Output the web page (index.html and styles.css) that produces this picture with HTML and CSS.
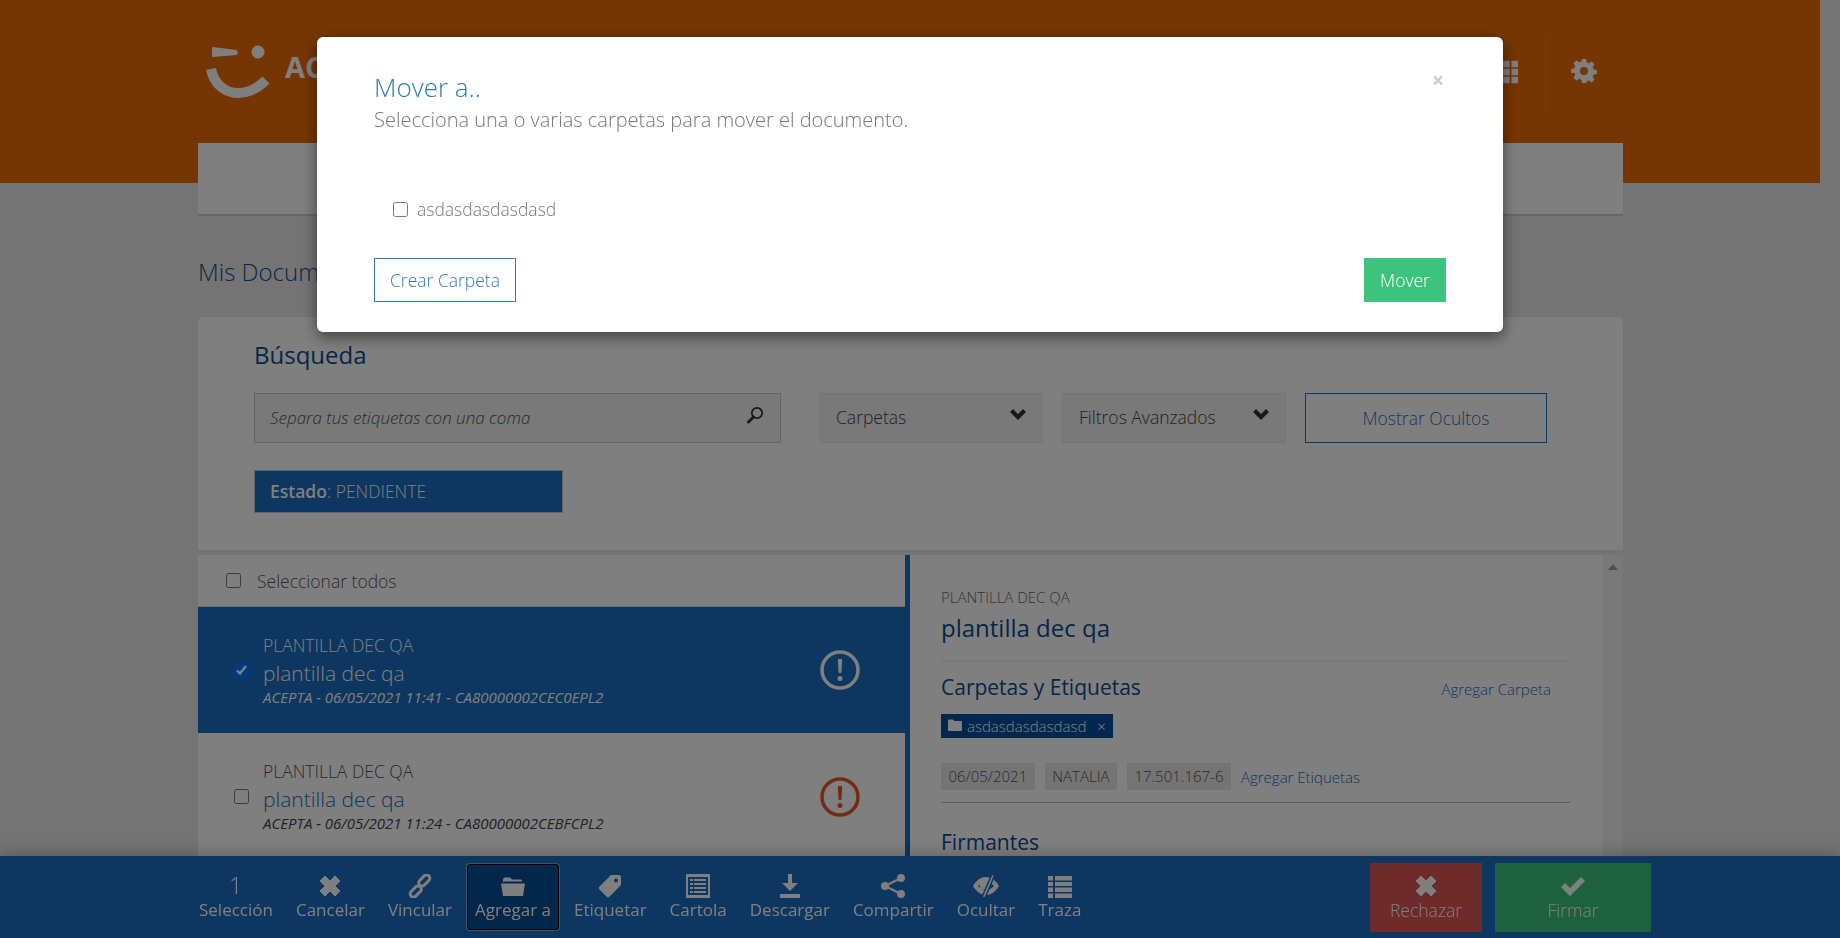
FILE: index.html
```html
<!DOCTYPE html>
<html lang="es">
<head>
<meta charset="utf-8">
<title>Mis Documentos</title>
<link rel="stylesheet" href="styles.css">
</head>
<body>
<div class="page">
  <header class="top">
    <div class="top-inner">
      <div class="logo">
        <svg class="logo-mark" viewBox="0 0 64 54"><path d="M7 3 L30 6 Q31.500 7.500 30 9 L7 11 Z" fill="currentColor" stroke="currentColor" stroke-width="2" stroke-linejoin="round"/><circle cx="52" cy="7" r="6.500" fill="currentColor"/><path d="M5 24 C8 40 20 48 32 48 C43 48 52 43 60 35" fill="none" stroke="currentColor" stroke-width="10"/></svg>
        <span class="logo-text">ACEPTA</span>
      </div>
      <div class="top-tools">
        <svg class="grid-ic" viewBox="0 0 16 24"><path d="M0 0h7v7H0zM9 0h7v7H9zM0 8.500h7v7H0zM9 8.500h7v7H9zM0 17h7v7H0zM9 17h7v7H9z" fill="currentColor"/></svg>
        <span class="top-sep"></span>
        <svg class="gear-ic" viewBox="0 0 24 24"><path fill="currentColor" fill-rule="evenodd" d="M10 0h4l.7 3.300 2.100.9 2.900-1.800 2.800 2.800-1.800 2.900.9 2.100 3.300.7v4l-3.300.7-.9 2.100 1.800 2.900-2.800 2.800-2.900-1.800-2.100.9L14 24h-4l-.7-3.300-2.100-.9-2.900 1.800-2.800-2.800 1.800-2.900-.9-2.100L-.9 14v-4l3.300-.7.9-2.100-1.800-2.900 2.800-2.800 2.900 1.800 2.100-.9zM12 8a4 4 0 1 0 0 8 4 4 0 0 0 0-8z"/></svg>
      </div>
    </div>
  </header>

  <main class="wrap">
    <nav class="tabs"></nav>
    <h1 class="page-title">Mis Documentos</h1>

    <section class="search">
      <h2 class="search-title">Búsqueda</h2>
      <div class="search-row">
        <div class="search-input">
          <span class="placeholder">Separa tus etiquetas con una coma</span>
          <svg class="mag" viewBox="0 0 18 18"><circle cx="11" cy="7" r="5.200" fill="none" stroke="currentColor" stroke-width="1.800"/><path d="M7.500 11 L2.500 16" stroke="currentColor" stroke-width="3" stroke-linecap="round"/></svg>
        </div>
        <div class="select"><span>Carpetas</span><svg class="chev" viewBox="0 0 16 12"><path d="M0 4 L3 1 L8 6 L13 1 L16 4 L8 12 Z" fill="currentColor"/></svg></div>
        <div class="select"><span>Filtros Avanzados</span><svg class="chev" viewBox="0 0 16 12"><path d="M0 4 L3 1 L8 6 L13 1 L16 4 L8 12 Z" fill="currentColor"/></svg></div>
        <button class="outline-btn">Mostrar Ocultos</button>
      </div>
      <div class="state"><b>Estado</b>: PENDIENTE</div>
    </section>

    <section class="panels">
      <div class="list">
        <label class="select-all"><input type="checkbox"><span>Seleccionar todos</span></label>
        <article class="doc doc-active">
          <input type="checkbox" checked>
          <div class="doc-text">
            <div class="doc-kind">PLANTILLA DEC QA</div>
            <div class="doc-name">plantilla dec qa</div>
            <div class="doc-meta">ACEPTA - 06/05/2021 11:41 - CA80000002CEC0EPL2</div>
          </div>
          <svg class="alert" viewBox="0 0 40 40"><circle cx="20" cy="20" r="18" fill="none" stroke="currentColor" stroke-width="3.500"/><path d="M17.800 9h4.400l-.8 14h-2.800z" fill="currentColor"/><circle cx="20" cy="28.500" r="2.500" fill="currentColor"/></svg>
        </article>
        <article class="doc">
          <input type="checkbox">
          <div class="doc-text">
            <div class="doc-kind">PLANTILLA DEC QA</div>
            <div class="doc-name">plantilla dec qa</div>
            <div class="doc-meta">ACEPTA - 06/05/2021 11:24 - CA80000002CEBFCPL2</div>
          </div>
          <svg class="alert alert-warn" viewBox="0 0 40 40"><circle cx="20" cy="20" r="18" fill="none" stroke="currentColor" stroke-width="3.500"/><path d="M17.800 9h4.400l-.8 14h-2.800z" fill="currentColor"/><circle cx="20" cy="28.500" r="2.500" fill="currentColor"/></svg>
        </article>
      </div>
      <div class="detail">
        <div class="detail-kind">PLANTILLA DEC QA</div>
        <div class="detail-name">plantilla dec qa</div>
        <hr class="rule-soft">
        <div class="detail-head">
          <h3 class="detail-title">Carpetas y Etiquetas</h3>
          <a class="link link-folder">Agregar Carpeta</a>
        </div>
        <div class="folder-chip">
          <svg class="chip-folder" viewBox="0 0 14 12"><path d="M0 1.500 Q0 .500 1 .500 H5 L6.500 2 H13 Q14 2 14 3 V11 Q14 12 13 12 H1 Q0 12 0 11 Z" fill="currentColor"/></svg>
          <span>asdasdasdasdasd</span><span class="chip-x">×</span>
        </div>
        <div class="tags">
          <span class="tag">06/05/2021</span>
          <span class="tag">NATALIA</span>
          <span class="tag">17.501.167-6</span>
          <a class="link">Agregar Etiquetas</a>
        </div>
        <hr class="rule">
        <h3 class="detail-title detail-signers">Firmantes</h3>
      </div>
      <div class="scrollbar"><span class="scroll-up"></span></div>
    </section>
  </main>

  <footer class="actions">
    <div class="action"><span class="count">1</span><span>Selección</span></div>
    <div class="action"><svg class="aic" viewBox="0 0 24 24"><path d="M2 7 L7 2 L12 7 L17 2 L22 7 L17 12 L22 17 L17 22 L12 17 L7 22 L2 17 L7 12 Z" fill="currentColor" stroke="currentColor" stroke-linejoin="round"/></svg><span>Cancelar</span></div>
    <div class="action"><svg class="aic" viewBox="0 0 24 24"><g fill="none" stroke="currentColor" stroke-width="3"><rect x="13" y="0" width="6.500" height="13" rx="3.250" transform="rotate(45 16.250 6.500)"/><rect x="4.500" y="11" width="6.500" height="13" rx="3.250" transform="rotate(45 7.750 17.500)"/></g></svg><span>Vincular</span></div>
    <div class="action action-on"><svg class="aic" viewBox="0 0 24 24"><path d="M2 6 Q2 3.500 3.500 3.500 H9 L11 5.500 H20 Q21 5.500 21 7.500 H3.500 Q2.500 7.500 2 8.500 Z M0 9.500 H24 L22 22 H2 Z" fill="currentColor"/></svg><span>Agregar a</span></div>
    <div class="action"><svg class="aic" viewBox="0 0 24 24"><path fill="currentColor" fill-rule="evenodd" d="M13 1 H21 Q23 1 23 3 V11 L11 23 Q10 24 9 23 L1 15 Q0 14 1 13 Z M18 4.500 a2 2 0 1 0 .01 0 Z"/></svg><span>Etiquetar</span></div>
    <div class="action"><svg class="aic" viewBox="0 0 24 24"><path fill="currentColor" fill-rule="evenodd" d="M0 0 H24 V24 H0 Z M2 3 V21 H22 V3 Z M4 5 H7 V7 H4 Z M8 5 H20 V7 H8 Z M4 9 H7 V11 H4 Z M8 9 H20 V11 H8 Z M4 13 H7 V15 H4 Z M8 13 H20 V15 H8 Z M4 17 H7 V19 H4 Z M8 17 H20 V19 H8 Z"/></svg><span>Cartola</span></div>
    <div class="action"><svg class="aic" viewBox="0 0 24 24"><path d="M10 0 H14 V9 H20 L12 17 L4 9 H10 Z M2 20 H22 V24 H2 Z" fill="currentColor"/></svg><span>Descargar</span></div>
    <div class="action"><svg class="aic" viewBox="0 0 24 24"><g fill="currentColor"><circle cx="20" cy="4" r="4"/><circle cx="4" cy="12" r="4"/><circle cx="20" cy="20" r="4"/></g><path d="M20 4 L4 12 L20 20" fill="none" stroke="currentColor" stroke-width="2.200"/></svg><span>Compartir</span></div>
    <div class="action"><svg class="aic aic-eye" viewBox="0 0 26 24"><path fill="currentColor" fill-rule="evenodd" d="M13 3 C19 3 24 8 26 12 C24 16 19 21 13 21 C7 21 2 16 0 12 C2 8 7 3 13 3 Z M13 8 C10 8 7 10 5 12 C7 14 10 16 13 16 C16 16 19 14 21 12 C19 10 16 8 13 8 Z"/><circle cx="11" cy="11" r="4.500" fill="currentColor"/><path d="M19 0 L21.500 1.500 L12 24 L9 23 Z" fill="currentColor" stroke="#1a6cc0" stroke-width="1.500"/></svg><span>Ocultar</span></div>
    <div class="action"><svg class="aic" viewBox="0 0 24 24"><path d="M0 2 H5 V6.500 H0 Z M7 2 H24 V6.500 H7 Z M0 8 H5 V12 H0 Z M7 8 H24 V12 H7 Z M0 13.500 H5 V18 H0 Z M7 13.500 H24 V18 H7 Z M0 19.500 H5 V24 H0 Z M7 19.500 H24 V24 H7 Z" fill="currentColor"/></svg><span>Traza</span></div>
    <div class="action-big big-reject"><svg class="aic" viewBox="0 0 24 24"><path d="M2 7 L7 2 L12 7 L17 2 L22 7 L17 12 L22 17 L17 22 L12 17 L7 22 L2 17 L7 12 Z" fill="currentColor" stroke="currentColor" stroke-linejoin="round"/></svg><span>Rechazar</span></div>
    <div class="action-big big-sign"><svg class="aic" viewBox="0 0 24 24"><path d="M0 13 L4 9 L9 14 L20 3 L24 7 L9 22 Z" fill="currentColor"/></svg><span>Firmar</span></div>
  </footer>
</div>

<div class="backdrop"></div>

<div class="modal">
  <div class="modal-head">
    <div>
      <h4 class="modal-title">Mover a..</h4>
      <p class="modal-sub">Selecciona una o varias carpetas para mover el documento.</p>
    </div>
    <span class="close">×</span>
  </div>
  <label class="folder-opt"><input type="checkbox"><span>asdasdasdasdasd</span></label>
  <div class="modal-foot">
    <button class="create-btn">Crear Carpeta</button>
    <button class="move-btn">Mover</button>
  </div>
</div>
</body>
</html>
```

FILE: styles.css
```css
* { box-sizing: border-box; }
html, body { margin: 0; height: 938px; overflow: hidden; }
body { background: #e8e8e8; font-family: "Open Sans", "Liberation Sans", sans-serif; color: #555; }
.page { width: 1820px; height: 938px; overflow: hidden; }
h1, h2, h3, h4, p { margin: 0; font-weight: 400; }

.top { height: 183px; background: #ec6c06; }
.top-inner { width: 1425px; margin-left: 198px; display: flex; justify-content: space-between; padding-top: 36px; }
.logo { display: flex; align-items: flex-start; gap: 15px; padding: 9px 0 0 8px; color: #fff; }
.logo-mark { width: 64px; height: 54px; }
.logo-text { font-size: 29px; font-weight: 700; line-height: 42px; margin-top: 1px; }
.top-tools { display: flex; align-items: flex-start; color: #fff; padding-right: 27px; }
.grid-ic { width: 15px; height: 24px; margin-top: 24px; }
.top-sep { width: 1px; height: 74px; background: rgba(255,255,255,.12); margin-left: 27px; }
.gear-ic { width: 24px; height: 24px; margin: 23px 0 0 26px; overflow: visible; }

.wrap { width: 1425px; margin: -40px 0 0 198px; }
.tabs { height: 73px; background: #fff; border-bottom: 2px solid #cfcfcf; }
.page-title { font-size: 24px; font-weight: 300; line-height: 34px; color: #0f4f96; margin-top: 39px; }

.search { margin-top: 28px; background: #fff; border-radius: 5px 5px 0 0; padding: 21px 0 37px 56px; }
.search-title { font-size: 24px; line-height: 34px; color: #0a4c90; }
.search-row { display: flex; margin-top: 21px; height: 50px; }
.search-input { width: 527px; display: flex; align-items: center; justify-content: space-between; background: #f2f2f2; border: 1px solid #c8c8c8; padding: 0 16px 0 15px; }
.placeholder { font-style: italic; font-weight: 300; font-size: 17px; color: #555; margin-bottom: 1px; }
.mag { width: 18px; height: 18px; color: #333; margin-top: -6px; }
.select { width: 224px; margin-left: 19px; display: flex; align-items: center; justify-content: space-between; background: #f2f2f2; border: 1px solid #ececec; padding: 0 16px 2px; font-size: 17.5px; font-weight: 300; color: #444; }
.search-input + .select { margin-left: 38px; }
.chev { width: 16px; height: 12px; color: #333; margin-top: -6px; }
.outline-btn { width: 242px; margin-left: 19px; padding-bottom: 2px; background: #fff; border: 1px solid #1a6cc0; font: 300 17.5px "Open Sans", sans-serif; color: #3b6bb0; }
.state { margin-top: 27px; width: 309px; height: 43px; background: #1a6cc0; border: 1px solid #c8c8c8; padding-left: 15px; line-height: 41px; font-size: 17.5px; font-weight: 300; color: #fff; }
.state b { font-weight: 600; }

.panels { display: flex; margin-top: 5px; height: 330px; background: #fff; }
.list { width: 707px; flex: none; }
.select-all { height: 52px; display: flex; align-items: center; gap: 16px; padding-left: 28px; font-size: 17.5px; font-weight: 300; color: #555; border-bottom: 1px solid #d8d8d8; }
input[type="checkbox"] { width: 15px; height: 15px; margin: 0; flex: none; }
.doc { height: 126px; display: flex; align-items: center; padding: 0 45px 0 36px; }
.doc + .doc { padding-top: 1px; }
.doc-active { background: #1a6cc0; color: #fff; }
.doc-text { flex: 1; margin-left: 14px; }
.doc-kind { font-size: 17.500px; font-weight: 300; line-height: 20px; }
.doc-name { font-size: 21px; font-weight: 300; line-height: 26px; margin-top: 5px; color: #1a6cc0; }
.doc-meta { font-size: 15px; font-style: italic; line-height: 18px; margin-top: 2px; color: #444; }
.doc-active .doc-name, .doc-active .doc-meta { color: #fff; }
.alert { width: 40px; height: 40px; color: #fff; flex: none; }
.alert-warn { color: #e5582a; }

.detail { flex: 1; border-left: 5px solid #1a6cc0; padding: 32px 32px 0 31px; }
.detail-kind { font-size: 15px; font-weight: 300; line-height: 20px; color: #666; }
.detail-name { font-size: 24px; line-height: 30px; margin-top: 6px; color: #0a4c90; }
.rule-soft { margin: 17px 0 0; border: 0; border-top: 2px solid #f2f2f2; }
.detail-head { display: flex; justify-content: space-between; align-items: center; margin-top: 12px; padding-right: 19px; }
.detail-title { font-size: 21px; line-height: 26px; color: #0a4c90; }
.link { font-size: 15px; font-weight: 300; color: #1a6cc0; }
.link-folder { margin-top: 3px; }
.folder-chip { display: inline-flex; align-items: center; margin-top: 14px; height: 24px; width: 172px; padding: 0 7px; background: #06509e; color: #fff; font-size: 15px; font-weight: 300; vertical-align: top; }
.chip-folder { width: 14px; height: 12px; margin-right: 5px; margin-top: -2px; }
.chip-x { margin-left: 11px; }
.tags { display: flex; align-items: center; gap: 10px; margin-top: 25px; }
.tag { height: 27px; line-height: 27px; padding: 0 7.500px; background: #e8e8e8; font-size: 15px; font-weight: 300; color: #555; }
.rule { margin: 12px 0 0; border: 0; border-top: 1px solid #bbb; }
.detail-signers { margin-top: 26px; }
.scrollbar { width: 21px; flex: none; background: #f2f2f2; display: flex; justify-content: center; padding-top: 9px; }
.scroll-up { width: 0; height: 0; border-left: 5px solid transparent; border-right: 5px solid transparent; border-bottom: 6px solid #a0a0a0; }

.actions { position: fixed; left: 0; right: 0; bottom: 0; height: 82px; display: flex; align-items: center; padding: 0 189px 0 191px; gap: 7px; background: #1a6cc0; color: #fff; box-shadow: 0 -3px 14px rgba(0,0,0,.22); font-size: 17px; }
.action { display: flex; flex-direction: column; align-items: center; padding: 9px 7px 0; height: 66px; border: 1px solid transparent; border-radius: 3px; line-height: 22px; }
.aic { width: 24px; height: 24px; margin-bottom: 1px; }
.aic-eye { width: 26px; }
.count { font-size: 24px; font-weight: 300; line-height: 24px; margin: -1px 0 2px; }
.action-on { background: #044e94; border-color: #000; box-shadow: 0 0 0 1px #7aa6d8; }
.action-big { display: flex; flex-direction: column; align-items: center; justify-content: center; height: 69px; line-height: 22px; font-weight: 300; font-size: 17.5px; }
.big-reject { width: 112px; margin-left: auto; background: #de5656; }
.big-sign { width: 156px; margin-left: 6px; background: #3dc37e; }

.backdrop { position: fixed; inset: 0; background: rgba(0,0,0,.5); }
.modal { position: fixed; left: 317px; top: 37px; width: 1186px; height: 295px; background: #fff; border-radius: 6px; box-shadow: 0 5px 15px rgba(0,0,0,.5); padding: 32px 57px 30px; display: flex; flex-direction: column; }
.modal-head { display: flex; justify-content: space-between; }
.modal-title { font-size: 26px; font-weight: 300; line-height: 36px; color: #337ab7; }
.modal-sub { font-size: 20px; font-weight: 300; line-height: 30px; color: #777; }
.close { font-size: 21px; font-weight: 700; line-height: 22px; color: #ccc; width: 16px; text-align: center; }
.folder-opt { display: flex; align-items: center; gap: 9px; margin: 62px 0 0 19px; font-size: 17.5px; font-weight: 300; line-height: 24px; color: #777; }
.modal-foot { display: flex; justify-content: space-between; margin-top: auto; }
.create-btn { width: 142px; height: 44px; background: #fff; border: 1px solid #337ab7; font: 300 17.5px "Open Sans", sans-serif; color: #337ab7; }
.move-btn { width: 82px; height: 44px; background: #3dc37e; border: 0; font: 300 17.5px "Open Sans", sans-serif; color: #fff; }
```
